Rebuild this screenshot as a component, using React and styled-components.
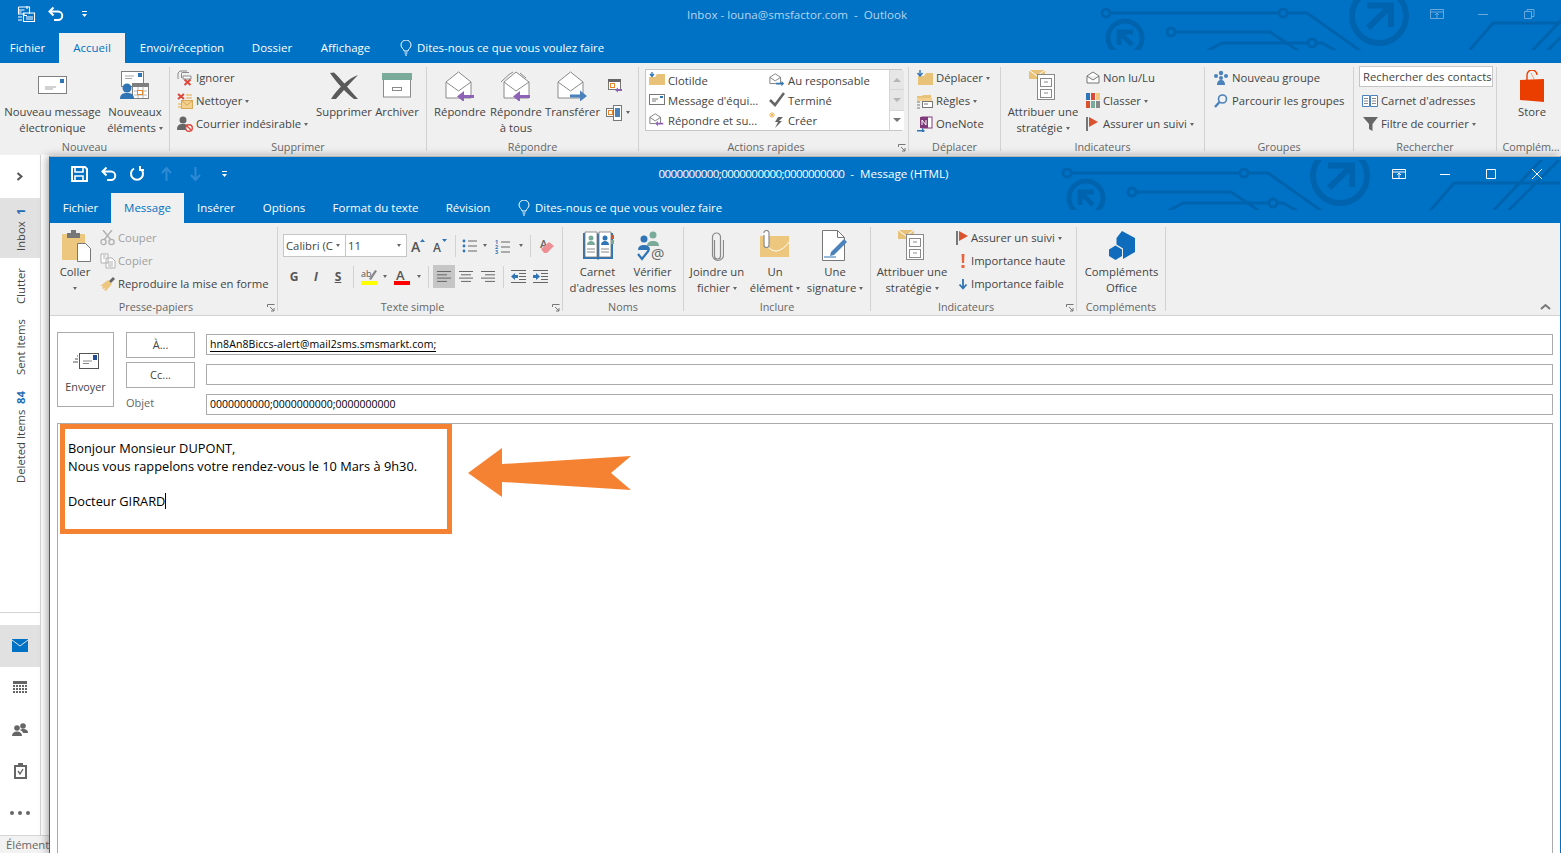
import React from 'react';
import styled, { createGlobalStyle } from 'styled-components';

const BLUE = '#0072c6';
const ART = '#0063ae';
const TEXT = '#444444';
const ORANGE = '#f58233';

const GlobalStyle = createGlobalStyle`
  html, body { margin: 0; padding: 0; background: #fff; }
  body { font-family: "Open Sans", "Noto Sans", sans-serif; font-size: 11.3px; color: ${TEXT}; }
  svg { display: block; flex: none; }
`;

/* ---------- window chrome drawings ---------- */

const CircuitArt = ({ x, w }) => (
  <svg width={w} height="50" viewBox={`${x} 0 ${w} 50`} fill="none" stroke={ART}>
    <g strokeWidth="3">
      <path d="M1106 13H1307L1362 52" />
      <path d="M1171 32H1270L1300 52" />
      <path d="M1205 52L1222 43H1322L1338 52" />
      <circle cx="1106" cy="13" r="4" fill={BLUE} />
      <circle cx="1283" cy="13" r="4" fill={BLUE} />
      <circle cx="1171" cy="32" r="4" fill={BLUE} />
      <circle cx="1312" cy="43" r="4" fill={BLUE} />
      <path d="M1468 52L1493 23H1610" />
      <path d="M1531 52L1582 -2M1546 52L1600 -2" />
    </g>
    <circle cx="1379" cy="16" r="27" strokeWidth="6" />
    <path d="M1367 5.5H1391V27M1391 5.5L1368 28" strokeWidth="6" />
    <circle cx="1125" cy="38" r="17" strokeWidth="5" />
    <path d="M1133 32H1119V45M1119 32L1132 45" strokeWidth="5" />
  </svg>
);

const Ctl = ({ kind, c }) => (
  <svg width="16" height="14" viewBox="0 0 16 14" fill="none" stroke={c}>
    {kind === 'ribbon' && <path d="M.5 1.5h13v9H.5zM.5 4h13M7 10V5M5 7l2-2 2 2" transform="translate(1 1)" />}
    {kind === 'min' && <path d="M3 7.5h10" />}
    {kind === 'max' && <path d="M3.5 2.5h9v9h-9z" />}
    {kind === 'restore' && <path d="M3.5 4.5h7v7h-7zM6 4.5V2.5h7v7h-2.500" />}
    {kind === 'close' && <path d="M3 2l10 10M13 2L3 12" />}
  </svg>
);

const QatGlyph = ({ kind, c = '#fff' }) => (
  <svg width="19" height="18" viewBox="0 0 19 18" fill="none" stroke={c} strokeWidth="1.6">
    {kind === 'all' && (
      <g strokeWidth="1.1">
        <path d="M1.500 2h11v7M1.500 2v7H8M10 1v3M1.500 5h6M1.500 7h3" />
        <path d="M6.500 8h11v8.500h-11zM9 12h7M9 14h7M7 10.500h3" />
        <path d="M1 12h4M1 15h4" />
      </g>
    )}
    {kind === 'undo' && <path d="M4 6.500h8a4 4 0 0 1 0 8.500H8M7.500 2.500L3.500 6.500l4 4" strokeWidth="2" />}
    {kind === 'redo' && <path d="M6 3.500a6 6 0 1 0 6 0M12 1v4h4" strokeWidth="2" />}
    {kind === 'up' && <path d="M9.500 16V4M5 8l4.500-5L14 8" strokeWidth="2" />}
    {kind === 'down' && <path d="M9.500 2v12M5 10l4.500 5 4.500-5" strokeWidth="2" />}
    {kind === 'more' && (
      <g>
        <path d="M7 6.500h5" strokeWidth="1" />
        <path d="M7 9h5l-2.500 3z" fill={c} stroke="none" />
      </g>
    )}
    {kind === 'save' && (
      <g>
        <path d="M2 2h13l2 2v12H2z" strokeWidth="2" />
        <path d="M5 2v5h8V2M5 16v-5h8v5" strokeWidth="1.600" />
      </g>
    )}
  </svg>
);

const Bulb = () => (
  <svg width="12" height="16" viewBox="0 0 12 16" fill="none" stroke="#fff">
    <path d="M4 11c0-2-3-3-3-6a5 5 0 0 1 10 0c0 3-3 4-3 6zM4.500 13h3M5 15h2" />
  </svg>
);

/* ---------- ribbon drawings, main window ---------- */

const NewMail = () => (
  <svg width="30" height="19" viewBox="0 0 30 19">
    <rect x=".5" y=".5" width="28" height="17" fill="#fff" stroke="#7f7f7f" />
    <rect x="22" y="3" width="4" height="4" fill="#2f74b5" />
    <path d="M7 11h11M7 13h8" stroke="#a5a5a5" />
  </svg>
);

const NewItems = () => (
  <svg width="30" height="30" viewBox="0 0 30 30">
    <rect x="1.500" y=".5" width="22" height="15" fill="#fff" stroke="#7f7f7f" />
    <rect x="18" y="2" width="4" height="4" fill="#2f74b5" />
    <path d="M5 5h9M5 7.500h7" stroke="#a5a5a5" />
    <rect x="12.500" y="12.500" width="16" height="15" fill="#fff" stroke="#7f7f7f" />
    <rect x="12" y="12" width="17" height="4" fill="#7f7f7f" />
    <path d="M14 20h13M14 24h13M18 16v11M23 16v11" stroke="#b5b5b5" />
    <rect x="17.500" y="19.500" width="5" height="4" fill="#fff" stroke="#e8862e" />
    <circle cx="7" cy="17" r="4.500" fill="#2f74b5" />
    <path d="M0 28c0-5 3-6 7-6s7 1 7 6z" fill="#2f74b5" />
  </svg>
);

const Small = ({ children, w = 16, h = 16 }) => (
  <svg width={w} height={h} viewBox={`0 0 ${w} ${h}`} fill="none">{children}</svg>
);

const IgnoreIcon = () => (
  <Small>
    <path d="M4.500 8V3.500a1 1 0 0 1 .5-1h7M1 9V3l2-2h7" stroke="#8a8a8a" />
    <path d="M6 6h8v3H6z" fill="#fff" stroke="#8a8a8a" />
    <path d="M7.500 9.500l6 5.500M13.500 9.500l-6 5.500" stroke="#d9483b" strokeWidth="2" />
  </Small>
);
const CleanIcon = () => (
  <Small>
    <rect x="4.500" y="7.500" width="11" height="8" fill="#f3d08d" stroke="#d9a958" />
    <path d="M5 8l5 4 5-4" stroke="#d9a958" />
    <path d="M9 2h6M9 5h6M1 11h3M1 14h3" stroke="#e9c27a" strokeWidth="1.500" />
    <path d="M1 1l6 5M7 1L1 6" stroke="#d9483b" strokeWidth="2" />
  </Small>
);
const JunkIcon = () => (
  <Small>
    <circle cx="6" cy="4" r="3.500" fill="#666" />
    <path d="M0 14c0-5 2-6 6-6s5 1 5 3v3z" fill="#666" />
    <circle cx="12" cy="12" r="3.300" fill="#fff" stroke="#d9483b" strokeWidth="1.400" />
    <path d="M10 10l4 4" stroke="#d9483b" strokeWidth="1.400" />
  </Small>
);
const DeleteX = () => (
  <svg width="30" height="28" viewBox="0 0 30 28">
    <path d="M1 1L5 .5C11 6 20 17 29 27L25 27C17 21 8 11 1 1Z" fill="#5a5a5a" />
    <path d="M29 3C20 6 8 17 2 27L7 27C13 20 21 11 29 3Z" fill="#5a5a5a" />
  </svg>
);
const ArchiveBox = () => (
  <svg width="30" height="25" viewBox="0 0 30 25">
    <rect x="1.500" y="5" width="27" height="19" fill="#fff" stroke="#8a8a8a" />
    <rect width="30" height="7" fill="#7aab9a" />
    <rect x="10.500" y="14.500" width="9" height="3" fill="#fff" stroke="#8a8a8a" />
  </svg>
);
const OpenMail = ({ arrow, stack }) => (
  <svg width="33" height="30" viewBox="0 0 33 30" fill="none">
    {stack && <path d="M1 11L9 3.500 13 1M20 2l6 5" stroke="#8a8a8a" />}
    <path d={`M${stack ? 4 : 2} 11L${stack ? 16 : 14.500} 1L${stack ? 29 : 27} 11V27H${stack ? 4 : 2}Z`} fill="#fff" stroke="#8a8a8a" />
    <path d={`M${stack ? 4 : 2} 11L${stack ? 16 : 14.500} 20L${stack ? 29 : 27} 11`} stroke="#8a8a8a" />
    {arrow === 'reply' && <path d="M13 25.500L20 20V24H30V27H20V31Z" fill="#8e62b5" />}
    {arrow === 'forward' && <path d="M31 25L24 19.500V23.500H14V26.500H24V30.500Z" fill="#4a82bc" />}
  </svg>
);
const MeetReply = () => (
  <Small>
    <rect x="1.500" y="1.500" width="12" height="10" fill="#fff" stroke="#777" />
    <rect x="1" y="1" width="13" height="3" fill="#666" />
    <rect x="3.500" y="5.500" width="4" height="4" stroke="#e8862e" />
    <path d="M8 12l3-2.500v1.500h4v2h-4v1.500z" fill="#8e62b5" />
  </Small>
);
const MobileIcon = () => (
  <Small w={18}>
    <rect x=".5" y="3.500" width="9" height="8" fill="#fff" stroke="#777" />
    <rect x="2.500" y="5.500" width="4" height="4" stroke="#e8862e" />
    <rect x="7.500" y=".5" width="8" height="15" fill="#fff" stroke="#777" />
    <rect x="9" y="3" width="5" height="9" fill="#4a82bc" />
  </Small>
);
const FolderMove = () => (
  <Small w={18}>
    <path d="M2 6h6l2-3h7v12H2z" fill="#e9c27a" />
    <path d="M4 0v5M1.500 3L4 6l2.500-3" stroke="#2f74b5" strokeWidth="1.400" />
  </Small>
);
const RulesIcon = () => (
  <Small w={18}>
    <path d="M1 5V3h5l1-1h8v3z" fill="#e9c27a" />
    <path d="M1 5h15v3H1z" fill="#f3d08d" />
    <rect x="6.500" y="8.500" width="10" height="6" fill="#fff" stroke="#777" />
    <path d="M8 11h4M1 9h3M1 12h3M1 15h3" stroke="#777" />
  </Small>
);
const OneNoteIcon = () => (
  <Small w={18}>
    <rect x="6" y="1" width="10" height="11" fill="#fff" stroke="#80397b" />
    <rect x="4" y="1" width="8" height="11" fill="#80397b" />
    <path d="M6 9V4l4 5V4" stroke="#fff" />
    <path d="M1 14h5v-2l3 3-3 2v-1.500H1z" fill="#2f74b5" />
  </Small>
);
const StrategyIcon = () => (
  <svg width="30" height="31" viewBox="0 0 30 31">
    <path d="M1 0h16v9H1z" fill="#e9c27a" />
    <path d="M1 0l8 6 8-6" stroke="#fff" fill="none" />
    <rect x="9.500" y="4.500" width="17" height="25" fill="#fff" stroke="#8a8a8a" />
    <rect x="12.500" y="8.500" width="11" height="8" fill="#fff" stroke="#8a8a8a" />
    <rect x="12.500" y="19.500" width="11" height="8" fill="#fff" stroke="#8a8a8a" />
    <path d="M16 12h4M16 23h4" stroke="#8a8a8a" />
  </svg>
);
const EnvelopeLine = () => (
  <Small>
    <path d="M2 6L8 2l6 4v7H2zM2 6l6 4 6-4" stroke="#777" fill="#fff" />
  </Small>
);
const ClassIcon = () => (
  <svg width="15" height="16" viewBox="0 0 15 16">
    <rect width="4" height="7" fill="#2f74b5" /><rect x="5" width="4" height="7" fill="#d9483b" /><rect x="10" width="4" height="7" fill="#f3c77f" />
    <rect y="8" width="4" height="7" fill="#d9532f" /><rect x="5" y="8" width="4" height="7" fill="#7aab9a" /><rect x="10" y="8" width="4" height="7" fill="#888" />
  </svg>
);
const FlagIcon = () => (
  <Small>
    <path d="M2 1v14" stroke="#777" strokeWidth="2" />
    <path d="M4 1l9 5-9 5z" fill="#d9532f" />
  </Small>
);
const GroupIcon = () => (
  <Small>
    <circle cx="3" cy="6" r="2" fill="#4a82bc" /><circle cx="8" cy="3" r="2.200" fill="#4a82bc" /><circle cx="13" cy="6" r="2" fill="#4a82bc" />
    <circle cx="8" cy="8" r="2" fill="#4a82bc" /><path d="M4 15c0-4 2-5 4-5s4 1 4 5z" fill="#4a82bc" />
  </Small>
);
const SearchIcon = () => (
  <Small>
    <circle cx="9.500" cy="6" r="4" stroke="#4a82bc" strokeWidth="1.600" />
    <path d="M6.500 9L2 14" stroke="#4a82bc" strokeWidth="2.400" />
  </Small>
);
const BookSmall = () => (
  <svg width="17" height="14" viewBox="0 0 17 14" fill="none">
    <path d="M.5 1.500h7v11h-7zM8.500 1.500h7v11h-7z" stroke="#4a82bc" fill="#fff" />
    <path d="M2 4.500h4M2 7h4M2 9.500h4M10 4.500h4M10 7h4M10 9.500h4" stroke="#888" />
  </svg>
);
const FilterIcon = () => (
  <Small>
    <path d="M0 1h15L9.500 8v7L6 13V8z" fill="#666" />
  </Small>
);
const StoreBag = () => (
  <svg width="26" height="32" viewBox="0 0 26 32">
    <path d="M8 10V5a5 5 0 0 1 10 0" stroke="#e83e00" fill="none" strokeWidth="1.400" />
    <path d="M1 10l24-1v23l-24-2z" fill="#ea3e00" />
    <path d="M12 3l3 6" stroke="#e9a07c" />
  </svg>
);
const Launcher = () => (
  <svg width="8" height="8" viewBox="0 0 8 8" fill="none" stroke="#777">
    <path d="M.5 3V.5H7.500M.5 .5" /><path d="M3 3l4 4M7 4v3H4" />
  </svg>
);

/* quick steps */
const GalleryFolder = () => (
  <Small>
    <path d="M0 5h6l2-3h8v11H0z" fill="#e9c27a" />
    <path d="M3 0v4M1 2l2 2.500L5 2" stroke="#2f74b5" strokeWidth="1.300" />
  </Small>
);
const TeamMail = () => (
  <Small>
    <rect x=".5" y="2.500" width="15" height="10" fill="#fff" stroke="#777" />
    <path d="M3 7h6M3 9h4" stroke="#777" /><rect x="11" y="4" width="3" height="2" fill="#2f74b5" />
  </Small>
);
const MailArrow = ({ c, right }) => (
  <svg width="16" height="16" viewBox="0 0 18 18" fill="none">
    <path d="M1 6l6-4 6 4v7H1zM1 6l6 4 6-4" stroke="#777" fill="#fff" />
    {right ? <path d="M17 13l-3-3v2H8v2h6v2z" fill={c} /> : <path d="M7 13l3-3v2h6v2h-6v2z" fill={c} />}
  </svg>
);
const CheckIcon = () => (
  <Small>
    <path d="M1 8l5 5L15 1" stroke="#666" strokeWidth="2.600" />
  </Small>
);
const BoltIcon = () => (
  <Small>
    <path d="M9 5h5l-4 4h3l-7 7 3-6H6z" fill="#666" />
    <path d="M3 0v6M0 3h6M1 1l4 4M5 1L1 5" stroke="#f0b860" />
  </Small>
);

/* ---------- ribbon drawings, message window ---------- */

const PasteIcon = () => (
  <svg width="34" height="32" viewBox="-4 0 34 32">
    <rect y="4" width="23" height="26" rx="1" fill="#eec77f" />
    <rect x="5" y="3" width="13" height="5" fill="#777" />
    <rect x="9" width="5" height="4" fill="#777" />
    <path d="M15.500 13.500h8l5 5v13h-13z" fill="#fff" stroke="#777" />
  </svg>
);
const CutIcon = () => (
  <Small>
    <path d="M4 10L12 0M11 10L3 0" stroke="#b0b0b0" strokeWidth="1.400" />
    <circle cx="3.500" cy="12" r="2.600" stroke="#b0b0b0" strokeWidth="1.300" />
    <circle cx="11.500" cy="12" r="2.600" stroke="#b0b0b0" strokeWidth="1.300" />
  </Small>
);
const CopyIcon = () => (
  <Small>
    <path d="M1 1h7v9H1zM6 5h6l3 3v7H6z" stroke="#b0b0b0" fill="#fff" />
    <path d="M3 3h3M3 5h2M8 9h5M8 11h5M8 13h5" stroke="#b0b0b0" />
  </Small>
);
const BrushIcon = () => (
  <Small>
    <path d="M0 10L8 4l4 4-6 7-2-1 1-2-2 1-1-1 1-2z" fill="#eec77f" />
    <path d="M9 5l4-4 2 2-4 4z" fill="#666" />
  </Small>
);
const GrowFont = ({ up }) => (
  <svg width="18" height="24" viewBox="0 0 18 24">
    <text x="1" y="18" fontFamily="Open Sans" fontSize={up ? 14 : 12} fontWeight="600" fill="#555">A</text>
    <path d={up ? 'M10 8l2.500-3L15 8z' : 'M10 5h5l-2.500 3z'} fill="#2f74b5" />
  </svg>
);
const BulletList = () => (
  <Small>
    <circle cx="2" cy="3" r="1.400" fill="#2f74b5" /><circle cx="2" cy="8" r="1.400" fill="#2f74b5" /><circle cx="2" cy="13" r="1.400" fill="#2f74b5" />
    <path d="M6 3h9M6 8h9M6 13h9" stroke="#666" />
  </Small>
);
const NumberList = () => (
  <svg width="16" height="24" viewBox="0 0 16 24" fill="none">
    <g fontFamily="Open Sans" fontSize="5.500" fontWeight="700" fill="#2f74b5">
      <text x="0" y="10">1</text>
      <text x="0" y="15">2</text>
      <text x="0" y="20">3</text>
    </g>
    <path d="M6 8h9M6 13h9M6 18h9" stroke="#666" />
  </svg>
);
const EraserIcon = () => (
  <svg width="16" height="24" viewBox="0 0 16 24">
    <text x="1" y="14" fontFamily="Open Sans" fontSize="11" fontWeight="600" fill="#666">A</text>
    <path d="M2 15l8-7 5 4-7 7H5z" fill="#ee8f94" />
  </svg>
);
const Highlight = () => (
  <svg width="17" height="24" viewBox="0 0 17 24">
    <text x="0" y="12" fontFamily="Open Sans" fontSize="9" fill="#555">ab</text>
    <path d="M8 14l6-9 2 1-6 9z" fill="#888" />
    <rect y="16" width="16" height="4" fill="#ff0" />
  </svg>
);
const FontColor = () => (
  <svg width="16" height="24" viewBox="0 0 16 24">
    <text x="2" y="15" fontFamily="Open Sans" fontSize="13" fontWeight="600" fill="#555">A</text>
    <rect y="16" width="16" height="4" fill="#f00" />
  </svg>
);
const AlignLines = ({ kind }) => {
  const short = kind === 'left' ? [1, 11] : kind === 'center' ? [3, 13] : [5, 15];
  const rows = [[1, 15], short, [1, 15], short];
  return (
    <Small h={13}>
      {rows.map(([a, b], i) => <path key={i} d={`M${a} ${1.5 + i * 3.3}H${b}`} stroke="#666" />)}
    </Small>
  );
};
const IndentIcon = ({ out }) => (
  <svg width="16" height="13" viewBox="0 0 16 13" fill="none">
    <path d="M1 .5h15M9 3.500h7M9 6.500h7M9 9.500h7M1 12.500h15" stroke="#666" />
    <path d={out ? 'M1 6.500L5 3v2h3v3H5v2z' : 'M8 6.500L4 3v2H1v3h3v2z'} fill="#2f74b5" />
  </svg>
);
const AddressBook = () => (
  <svg width="32" height="29" viewBox="0 0 32 29">
    <path d="M1 2h14l1 1 1-1h14v26H17l-1 1-1-1H1z" fill="#2f74b5" />
    <path d="M3 1h12v25H3zM17 1h12v25H17z" fill="#fff" stroke="#777" strokeWidth=".8" />
    <circle cx="9" cy="7" r="2.500" fill="#7aab9a" /><path d="M5 14c0-3 2-4 4-4s4 1 4 4z" fill="#7aab9a" />
    <circle cx="23" cy="7" r="2.500" fill="#2f74b5" /><path d="M19 14c0-3 2-4 4-4s4 1 4 4z" fill="#2f74b5" />
    <path d="M5 18h8M5 21h8M19 18h8M19 21h8" stroke="#888" />
    <path d="M29 4h3v4h-3z" fill="#d9532f" /><path d="M29 9h3v4h-3z" fill="#7aab9a" />
  </svg>
);
const CheckNames = () => (
  <svg width="31" height="36" viewBox="0 0 31 36" fill="none">
    <circle cx="16" cy="7" r="3.500" fill="#7aab9a" /><path d="M10 18c0-4 3-5 6-5s6 1 6 5z" fill="#7aab9a" />
    <circle cx="7" cy="11" r="3.500" fill="#2f74b5" /><path d="M1 22c0-4 3-5 6-5s6 1 6 5z" fill="#2f74b5" />
    <path d="M1 26l4 5 7-9" stroke="#2f74b5" strokeWidth="2.200" />
    <text x="14" y="31" fontFamily="Open Sans" fontSize="15" fill="#666">@</text>
  </svg>
);
const Clip = () => (
  <svg width="13" height="32" viewBox="0 0 13 32" fill="none" stroke="#8a8a8a" strokeWidth="1.200">
    <path d="M3.500 9v16a3 3 0 0 0 6 0V6a4 4 0 0 0-8 0v18a5.500 5.500 0 0 0 11 0V9" transform="translate(0 1)" />
  </svg>
);
const ItemAttach = () => (
  <svg width="30" height="31" viewBox="0 0 30 31" fill="none">
    <rect y="6" width="29" height="21" fill="#eec77f" />
    <path d="M5 13c3 6 8 8 11 8s9-3 13-9" stroke="#fff" />
    <path d="M4 5v10a2.500 2.500 0 0 0 5 0V3a2.500 2.500 0 0 0-5 0" stroke="#8a8a8a" fill="#fff" strokeWidth="1.200" />
  </svg>
);
const SignatureIcon = () => (
  <svg width="29" height="32" viewBox="0 0 29 32" fill="none">
    <path d="M1.500.5h15l7 7v23h-22z" fill="#fff" stroke="#777" />
    <path d="M16.500.5v7h7" stroke="#777" />
    <path d="M10 22l13-13 3 3-13 13-4 1z" fill="#4a82bc" />
    <path d="M3 27h12" stroke="#2f74b5" />
  </svg>
);
const Exclaim = () => (
  <Small w={8}>
    <path d="M2.500 1h3l-.5 9H3z" fill="#e8643c" /><rect x="2.500" y="12" width="3" height="3" fill="#e8643c" />
  </Small>
);
const DownArrow = () => (
  <Small w={10}>
    <path d="M5 3v9M1.500 8.500L5 12.500l3.500-4" stroke="#2f74b5" strokeWidth="1.800" />
  </Small>
);
const OfficeHex = () => (
  <svg width="26" height="29" viewBox="0 0 26 29" fill="#0f6cbd">
    <path d="M13 0L26 7V21L14 28V17.500L7.500 13.500V7Z" />
    <path d="M6.500 14.500L13 18.500V25L6.500 29L0 25V18.500Z" />
  </svg>
);
const SendIcon = () => (
  <svg width="26" height="17" viewBox="0 0 26 17">
    <rect x="6.500" y=".5" width="19" height="15" fill="#fff" stroke="#555" />
    <rect x="20" y="2" width="4" height="5" fill="#1f4e96" />
    <path d="M10 8h9M10 10.500h6" stroke="#888" />
    <path d="M4 3h1M2 6h3M0 9h5" stroke="#555" />
  </svg>
);

/* ---------- nav rail drawings ---------- */

const RailMail = () => (
  <svg width="16" height="13" viewBox="0 0 16 13">
    <rect width="16" height="13" fill={BLUE} />
    <path d="M0 1l8 6 8-6" stroke="#e1e1e1" fill="none" />
  </svg>
);
const RailCalendar = () => (
  <svg width="14" height="13" viewBox="0 0 14 13" fill="#666">
    <rect width="14" height="3" />
    {[4, 7, 10].map(y => [0, 3, 6, 9, 12].map(x => <rect key={`${x}-${y}`} x={x} y={y} width="2" height="2" />))}
  </svg>
);
const RailPeople = () => (
  <svg width="16" height="13" viewBox="0 0 16 13" fill="#666">
    <circle cx="5" cy="5" r="2.800" /><path d="M0 13c0-3 2-4.500 5-4.500s5 1.500 5 4.500z" />
    <circle cx="11" cy="3" r="2.800" /><path d="M8 7c1-1 2-1 3-1 3 0 5 1 5 4h-5c0-1-1-2-3-3z" />
  </svg>
);
const RailTasks = () => (
  <svg width="13" height="16" viewBox="0 0 13 16" fill="none">
    <rect y="2" width="13" height="14" fill="#666" />
    <rect x="2" y="4" width="9" height="10" fill="#fff" />
    <rect x="4" width="5" height="4" fill="#666" />
    <path d="M4 8l2 3 3-5" stroke="#666" strokeWidth="1.400" />
  </svg>
);
const RailDots = () => (
  <svg width="20" height="4" viewBox="0 0 20 4" fill="#666">
    <circle cx="2" cy="2" r="2" /><circle cx="10" cy="2" r="2" /><circle cx="18" cy="2" r="2" />
  </svg>
);

/* ---------- styled parts ---------- */

const Desktop = styled.div`
  position: relative;
  width: 1561px;
  height: 853px;
  overflow: hidden;
  background: #fff;
`;

const MainWindow = styled.div`
  display: flex;
  flex-direction: column;
  height: 100%;
`;

const TitleBar = styled.div`
  position: relative;
  display: flex;
  align-items: center;
  height: ${p => p.$h}px;
  flex: none;
  box-sizing: border-box;
  padding-left: ${p => p.$left}px;
  padding-bottom: ${p => p.$lift}px;
  background: ${BLUE};
`;

const ArtLayer = styled.div`
  position: absolute;
  top: ${p => p.$top}px;
  right: 0;
`;

const Qat = styled.div`
  position: relative;
  display: flex;
  width: ${p => p.$w}px;
  flex: none;
`;

const QatButton = styled.div`
  display: flex;
  justify-content: center;
  width: 29px;
`;

const WindowTitle = styled.div`
  position: relative;
  flex: 1;
  text-align: center;
  padding-left: ${p => p.$shift || 0}px;
  padding-right: ${p => p.$pull || 0}px;
  font-size: 11.6px;
  color: ${p => p.$dim ? '#b5d5ef' : '#fff'};
`;

const TitleDigits = styled.span`
  letter-spacing: -0.6px;
`;

const Controls = styled.div`
  position: relative;
  display: flex;
  flex: none;
  margin-right: ${p => p.$right}px;
`;

const ControlButton = styled.div`
  display: flex;
  justify-content: center;
  width: 46px;
`;

const TabRow = styled.div`
  display: flex;
  align-items: stretch;
  height: 30px;
  flex: none;
  background: ${BLUE};
`;

const Tab = styled.div`
  display: flex;
  align-items: center;
  justify-content: center;
  width: ${p => p.$w}px;
  margin-right: ${p => p.$gap || 0}px;
  padding-bottom: 1px;
  box-sizing: border-box;
  font-size: 11.5px;
  color: ${p => p.$active ? BLUE : '#fff'};
  background: ${p => p.$active ? '#f0f0f0' : 'transparent'};
`;

const TellMe = styled.div`
  display: flex;
  align-items: center;
  gap: 5px;
  margin-left: ${p => p.$left}px;
  padding-bottom: 1px;
  font-size: 11.4px;
  color: #fff;
`;

const Ribbon = styled.div`
  display: flex;
  height: 92px;
  flex: none;
  padding-top: 4px;
  box-sizing: border-box;
  background: #f0f0f0;
`;

const Group = styled.section`
  display: flex;
  flex-direction: column;
  width: ${p => p.$w}px;
  height: 84px;
  box-sizing: border-box;
  flex: none;
  border-right: ${p => p.$plain ? 'none' : '1px solid #d2d2d2'};
`;

const GroupBody = styled.div`
  display: flex;
  height: 72px;
  flex: none;
  padding-left: ${p => p.$pad || 0}px;
`;

const GroupLabel = styled.div`
  position: relative;
  height: 12px;
  line-height: 16px;
  padding-right: ${p => p.$launch ? 15 : 0}px;
  padding-left: ${p => p.$nudge || 0}px;
  font-size: 10.8px;
  text-align: center;
  color: #666;
  white-space: nowrap;
`;

const LauncherMark = styled.span`
  position: absolute;
  right: 2px;
  top: 5px;
`;

const LargeButton = styled.div`
  display: flex;
  flex-direction: column;
  align-items: center;
  width: ${p => p.$w}px;
  margin-left: ${p => p.$ml || 0}px;
  flex: none;
  line-height: 16px;
  white-space: nowrap;
  text-align: center;
`;

const IconSlot = styled.div`
  display: flex;
  align-items: center;
  justify-content: center;
  height: 37px;
`;

const Caret = styled.span`
  display: inline-block;
  width: 0;
  height: 0;
  margin-left: ${p => p.$gap ?? 3}px;
  vertical-align: middle;
  border-left: 2.5px solid transparent;
  border-right: 2.5px solid transparent;
  border-top: 3px solid #666;
`;

const Stack = styled.div`
  display: flex;
  flex-direction: column;
  width: ${p => p.$w}px;
  margin-left: ${p => p.$ml || 0}px;
  margin-top: -1px;
  flex: none;
`;

const SmallRow = styled.div`
  display: flex;
  align-items: center;
  gap: ${p => p.$gap ?? 3}px;
  height: 23px;
  white-space: nowrap;
  color: ${p => p.$off ? '#a0a0a0' : TEXT};
`;

const MeetSlot = styled(SmallRow)`
  height: 35px;
  padding-top: 5px;
  box-sizing: border-box;
`;

const RowIcon = styled.span`
  display: flex;
  justify-content: center;
  width: ${p => p.$w || 16}px;
  flex: none;
`;

const Gallery = styled.div`
  display: flex;
  width: 257px;
  height: 62px;
  margin: 2px 0 0 6px;
  box-sizing: border-box;
  border: 1px solid #c6c6c6;
  background: #fff;
`;

const GalleryGrid = styled.div`
  display: grid;
  grid-template-columns: 120px 120px;
  grid-auto-rows: 20px;
  flex: 1;
  padding-left: 3px;
`;

const GalleryItem = styled.div`
  display: flex;
  align-items: center;
  gap: 3px;
  white-space: nowrap;
`;

const GalleryScroll = styled.div`
  display: flex;
  flex-direction: column;
  width: 14px;
  flex: none;
  border-left: 1px solid #d6d6d6;
`;

const ScrollCell = styled.div`
  display: flex;
  align-items: center;
  justify-content: center;
  flex: 1;
  background: ${p => p.$plain ? '#fff' : '#e6e6e6'};
  border-bottom: ${p => p.$plain ? 'none' : '1px solid #d6d6d6'};
`;

const ScrollArrow = styled.span`
  width: 0;
  height: 0;
  border-left: 4px solid transparent;
  border-right: 4px solid transparent;
  ${p => p.$up ? 'border-bottom: 4px solid #b5b5b5;' : `border-top: 4px solid ${p.$dark ? '#777' : '#b5b5b5'};`}
`;

const SearchField = styled.div`
  display: flex;
  align-items: center;
  width: 134px;
  height: 21px;
  margin: 0 0 2px 5px;
  padding-left: 3px;
  box-sizing: border-box;
  border: 1px solid #c6c6c6;
  background: #fff;
  font-size: 11.3px;
  white-space: nowrap;
  overflow: hidden;
`;

const SearchRows = styled.div`
  padding-left: 8px;
`;

const FontTools = styled.div`
  display: flex;
  flex-direction: column;
  height: 72px;
  flex: none;
  box-sizing: border-box;
  padding: 3px 0 0 5px;
`;

const ToolRow = styled.div`
  display: flex;
  align-items: center;
  height: ${p => p.$h}px;
  margin-top: ${p => p.$top || 0}px;
`;

const Combo = styled.div`
  display: flex;
  align-items: center;
  justify-content: space-between;
  width: ${p => p.$w}px;
  height: 23px;
  padding: 0 5px 0 2px;
  box-sizing: border-box;
  border: 1px solid #c6c6c6;
  margin-right: ${p => p.$gap || 0}px;
  background: #fff;
  white-space: nowrap;
  overflow: hidden;
`;

const Tool = styled.div`
  display: flex;
  align-items: center;
  justify-content: center;
  width: ${p => p.$w || 22}px;
  height: 23px;
  background: ${p => p.$on ? '#c6c6c6' : 'transparent'};
  font: ${p => p.$font || 'inherit'};
  color: #555;
`;

const ToolSep = styled.div`
  width: 1px;
  height: 22px;
  margin-left: ${p => p.$ml}px;
  margin-right: ${p => p.$mr}px;
  background: #d2d2d2;
`;

const Collapse = styled.div`
  display: flex;
  flex: 1;
  justify-content: flex-end;
  align-items: flex-end;
  padding: 0 9px 5px 0;
`;

const Workspace = styled.div`
  display: flex;
  flex: 1;
  min-height: 0;
`;

const Rail = styled.nav`
  display: flex;
  flex-direction: column;
  width: 41px;
  box-sizing: border-box;
  border-right: 1px solid #d4d4d4;
`;

const RailToggle = styled.div`
  display: flex;
  align-items: center;
  justify-content: center;
  height: 43px;
  padding-right: 2px;
  box-sizing: border-box;
  flex: none;
`;

const FolderTab = styled.div`
  display: flex;
  align-items: center;
  justify-content: flex-start;
  height: ${p => p.$h}px;
  box-sizing: border-box;
  padding-top: 7px;
  flex: none;
  writing-mode: vertical-rl;
  transform: rotate(180deg);
  white-space: nowrap;
  font-size: 11.3px;
  background: ${p => p.$on ? '#e1e1e1' : 'transparent'};
`;

const FolderInner = styled.div`
  display: flex;
  align-items: center;
  flex-direction: row;
  gap: 6px;
`;

const Count = styled.b`
  color: #1f6cb5;
  font-weight: 700;
`;

const RailModules = styled.div`
  margin-top: auto;
  padding-top: 12px;
  border-top: 1px solid #d4d4d4;
`;

const ModuleButton = styled.div`
  display: flex;
  align-items: center;
  justify-content: center;
  height: 42px;
  padding-bottom: 2px;
  box-sizing: border-box;
  background: ${p => p.$on ? '#e1e1e1' : 'transparent'};
`;

const StatusBar = styled.div`
  height: 17px;
  flex: none;
  padding-left: 6px;
  line-height: 18px;
  border-top: 1px solid #d4d4d4;
  background: #f2f2f2;
  font-size: 11.3px;
  color: #666;
`;

const ComposeWindow = styled.div`
  position: absolute;
  left: 49px;
  top: 156px;
  right: 0;
  bottom: 0;
  display: flex;
  flex-direction: column;
  box-sizing: border-box;
  border-top: 1px solid #b4b4b4;
  border-left: 1px solid ${BLUE};
  border-right: 1px solid ${BLUE};
  background: #fff;
  box-shadow: -2px 0 8px rgba(0, 0, 0, 0.35);
`;

const RibbonEdge = styled.div`
  height: 1px;
  flex: none;
  background: #d2d2d2;
`;

const ComposeBody = styled.div`
  display: flex;
  flex-direction: column;
  flex: 1;
  min-height: 0;
  padding: 16px 7px 0;
`;

const Header = styled.div`
  display: flex;
  align-items: flex-start;
  flex: none;
`;

const SendButton = styled.div`
  display: flex;
  flex-direction: column;
  align-items: center;
  width: 57px;
  height: 75px;
  padding-top: 20px;
  box-sizing: border-box;
  gap: 9px;
  margin-right: 12px;
  border: 1px solid #ababab;
  font-size: 10.8px;
  color: #444;
`;

const Fields = styled.div`
  display: grid;
  grid-template-columns: 69px 1fr;
  grid-auto-rows: 30px;
  column-gap: 11px;
  flex: 1;
`;

const AddressButton = styled.div`
  display: flex;
  align-items: center;
  justify-content: center;
  height: 26px;
  padding-bottom: 1px;
  box-sizing: border-box;
  border: 1px solid #ababab;
  font-size: 11px;
`;

const SubjectLabel = styled.div`
  line-height: 18px;
  margin-top: 2px;
  font-size: 11px;
  color: #666;
`;

const FieldInput = styled.div`
  height: 21px;
  margin-top: 2px;
  padding-left: 3px;
  line-height: 18px;
  box-sizing: border-box;
  border: 1px solid #ababab;
  font-size: 10.5px;
  color: #000;
`;

const Recipient = styled.span`
  letter-spacing: 0.1px;
  border-bottom: 1px solid #000;
`;

const MessageArea = styled.div`
  display: flex;
  align-items: flex-start;
  flex: 1;
  margin-top: 1px;
  padding-left: 2px;
  border: 1px solid #ababab;
  border-bottom: none;
`;

const CalloutBox = styled.div`
  width: 392px;
  height: 110px;
  box-sizing: border-box;
  padding: 11px 0 0 3px;
  border: 5px solid ${ORANGE};
  font-size: 12.8px;
  line-height: 17.67px;
  color: #000;
`;

const Cursor = styled.span`
  display: inline-block;
  height: 16px;
  border-left: 1px solid #000;
  vertical-align: -3px;
`;

const CalloutArrow = styled.div`
  margin: 24px 0 0 16px;
`;

const Row = ({ icon, w, off, gap, children, caret }) => (
  <SmallRow $off={off} $gap={gap}>
    <RowIcon $w={w}>{icon}</RowIcon>
    <span>{children}{caret && <Caret />}</span>
  </SmallRow>
);

const Big = ({ w, ml, icon, l1, l2, caret }) => (
  <LargeButton $w={w} $ml={ml}>
    <IconSlot>{icon}</IconSlot>
    <span>{l1}</span>
    {(l2 || caret) && <span>{l2}{caret && <Caret />}</span>}
  </LargeButton>
);

const MainRibbon = () => (
  <Ribbon>
    <Group $w={170}>
      <GroupBody>
        <Big w={105} icon={<NewMail />} l1="Nouveau message" l2="électronique" />
        <Big w={60} icon={<NewItems />} l1="Nouveaux" l2="éléments" caret />
      </GroupBody>
      <GroupLabel>Nouveau</GroupLabel>
    </Group>
    <Group $w={257}>
      <GroupBody $pad={7}>
        <Stack $w={139}>
          <Row icon={<IgnoreIcon />}>Ignorer</Row>
          <Row icon={<CleanIcon />} caret>Nettoyer</Row>
          <Row icon={<JunkIcon />} caret>Courrier indésirable</Row>
        </Stack>
        <Big w={56} icon={<DeleteX />} l1="Supprimer" />
        <Big w={50} icon={<ArchiveBox />} l1="Archiver" />
      </GroupBody>
      <GroupLabel>Supprimer</GroupLabel>
    </Group>
    <Group $w={212}>
      <GroupBody $pad={5}>
        <Big w={56} icon={<OpenMail arrow="reply" />} l1="Répondre" />
        <Big w={56} icon={<OpenMail arrow="reply" stack />} l1="Répondre" l2="à tous" />
        <Big w={57} icon={<OpenMail arrow="forward" />} l1="Transférer" />
        <Stack $w={30} $ml={3}>
          <MeetSlot><RowIcon $w={22}><MeetReply /></RowIcon></MeetSlot>
          <SmallRow $gap={0}><RowIcon $w={22}><MobileIcon /></RowIcon><Caret $gap={0} /></SmallRow>
        </Stack>
      </GroupBody>
      <GroupLabel>Répondre</GroupLabel>
    </Group>
    <Group $w={270}>
      <GroupBody>
        <Gallery>
          <GalleryGrid>
            <GalleryItem><GalleryFolder /><span>Clotilde</span></GalleryItem>
            <GalleryItem><MailArrow c="#2f74b5" right /><span>Au responsable</span></GalleryItem>
            <GalleryItem><TeamMail /><span>Message d'équi...</span></GalleryItem>
            <GalleryItem><CheckIcon /><span>Terminé</span></GalleryItem>
            <GalleryItem><MailArrow c="#8e62b5" /><span>Répondre et su...</span></GalleryItem>
            <GalleryItem><BoltIcon /><span>Créer</span></GalleryItem>
          </GalleryGrid>
          <GalleryScroll>
            <ScrollCell><ScrollArrow $up /></ScrollCell>
            <ScrollCell><ScrollArrow /></ScrollCell>
            <ScrollCell $plain><ScrollArrow $dark /></ScrollCell>
          </GalleryScroll>
        </Gallery>
      </GroupBody>
      <GroupLabel $launch>Actions rapides<LauncherMark><Launcher /></LauncherMark></GroupLabel>
    </Group>
    <Group $w={92}>
      <GroupBody $pad={7}>
        <Stack $w={84}>
          <Row icon={<FolderMove />} w={18} gap={2} caret>Déplacer</Row>
          <Row icon={<RulesIcon />} w={18} gap={2} caret>Règles</Row>
          <Row icon={<OneNoteIcon />} w={18} gap={2}>OneNote</Row>
        </Stack>
      </GroupBody>
      <GroupLabel>Déplacer</GroupLabel>
    </Group>
    <Group $w={204}>
      <GroupBody $pad={5}>
        <Big w={74} icon={<StrategyIcon />} l1="Attribuer une" l2="stratégie" caret />
        <Stack $w={118} $ml={5}>
          <Row icon={<EnvelopeLine />} gap={2}>Non lu/Lu</Row>
          <Row icon={<ClassIcon />} gap={2} caret>Classer</Row>
          <Row icon={<FlagIcon />} gap={2} caret>Assurer un suivi</Row>
        </Stack>
      </GroupBody>
      <GroupLabel>Indicateurs</GroupLabel>
    </Group>
    <Group $w={149}>
      <GroupBody $pad={8}>
        <Stack $w={136}>
          <Row icon={<GroupIcon />}>Nouveau groupe</Row>
          <Row icon={<SearchIcon />}>Parcourir les groupes</Row>
        </Stack>
      </GroupBody>
      <GroupLabel>Groupes</GroupLabel>
    </Group>
    <Group $w={143}>
      <GroupBody>
        <Stack $w={140}>
          <SearchField>Rechercher des contacts</SearchField>
          <SearchRows>
            <Row icon={<BookSmall />} w={17} gap={2}>Carnet d'adresses</Row>
            <Row icon={<FilterIcon />} w={17} gap={2} caret>Filtre de courrier</Row>
          </SearchRows>
        </Stack>
      </GroupBody>
      <GroupLabel>Rechercher</GroupLabel>
    </Group>
    <Group $w={64} $plain>
      <GroupBody>
        <Big w={70} icon={<StoreBag />} l1="Store" />
      </GroupBody>
      <GroupLabel $nudge={4}>Complém...</GroupLabel>
    </Group>
  </Ribbon>
);

const MessageRibbon = () => (
  <Ribbon>
    <Group $w={228}>
      <GroupBody $pad={5}>
        <LargeButton $w={40}>
          <IconSlot><PasteIcon /></IconSlot>
          <span>Coller</span>
          <span><Caret $gap={0} /></span>
        </LargeButton>
        <Stack $w={180} $ml={5}>
          <Row icon={<CutIcon />} off gap={2}>Couper</Row>
          <Row icon={<CopyIcon />} off gap={2}>Copier</Row>
          <Row icon={<BrushIcon />} gap={2}>Reproduire la mise en forme</Row>
        </Stack>
      </GroupBody>
      <GroupLabel $launch>Presse-papiers<LauncherMark><Launcher /></LauncherMark></GroupLabel>
    </Group>
    <Group $w={285}>
      <FontTools>
        <ToolRow $h={31}>
          <Combo $w={63} $gap={-1}>Calibri (C<Caret $gap={0} /></Combo>
          <Combo $w={62}>11<Caret $gap={0} /></Combo>
          <Tool $w={24}><GrowFont up /></Tool>
          <Tool $w={20}><GrowFont /></Tool>
          <ToolSep $ml={4} $mr={5} />
          <Tool $w={18}><BulletList /></Tool>
          <Caret $gap={4} />
          <Tool $w={32}><NumberList /></Tool>
          <Caret $gap={0} />
          <ToolSep $ml={7} $mr={5} />
          <Tool $w={22}><EraserIcon /></Tool>
        </ToolRow>
        <ToolRow $h={23} $top={4}>
          <Tool $font={'700 12px "Open Sans"'}>G</Tool>
          <Tool $font={'italic 700 12px "Open Sans"'}>I</Tool>
          <Tool $font={'700 12px "Open Sans"'}><u>S</u></Tool>
          <ToolSep $ml={4} $mr={4} />
          <Tool><Highlight /></Tool>
          <Caret $gap={3} />
          <Tool $w={30}><FontColor /></Tool>
          <Caret $gap={0} />
          <ToolSep $ml={7} $mr={4} />
          <Tool $on><AlignLines kind="left" /></Tool>
          <Tool><AlignLines kind="center" /></Tool>
          <Tool><AlignLines kind="right" /></Tool>
          <ToolSep $ml={4} $mr={3} />
          <Tool><IndentIcon out /></Tool>
          <Tool><IndentIcon /></Tool>
        </ToolRow>
      </FontTools>
      <GroupLabel $launch>Texte simple<LauncherMark><Launcher /></LauncherMark></GroupLabel>
    </Group>
    <Group $w={121}>
      <GroupBody $pad={7}>
        <Big w={55} icon={<AddressBook />} l1="Carnet" l2="d'adresses" />
        <Big w={55} icon={<CheckNames />} l1="Vérifier" l2="les noms" />
      </GroupBody>
      <GroupLabel>Noms</GroupLabel>
    </Group>
    <Group $w={187}>
      <GroupBody $pad={4}>
        <Big w={58} icon={<Clip />} l1="Joindre un" l2="fichier" caret />
        <Big w={58} icon={<ItemAttach />} l1="Un" l2="élément" caret />
        <Big w={62} icon={<SignatureIcon />} l1="Une" l2="signature" caret />
      </GroupBody>
      <GroupLabel>Inclure</GroupLabel>
    </Group>
    <Group $w={206}>
      <GroupBody $pad={5}>
        <Big w={72} icon={<StrategyIcon />} l1="Attribuer une" l2="stratégie" caret />
        <Stack $w={125} $ml={7}>
          <Row icon={<FlagIcon />} gap={0} caret>Assurer un suivi</Row>
          <Row icon={<Exclaim />} gap={0}>Importance haute</Row>
          <Row icon={<DownArrow />} gap={0}>Importance faible</Row>
        </Stack>
      </GroupBody>
      <GroupLabel $launch>Indicateurs<LauncherMark><Launcher /></LauncherMark></GroupLabel>
    </Group>
    <Group $w={89}>
      <GroupBody>
        <Big w={89} icon={<OfficeHex />} l1="Compléments" l2="Office" />
      </GroupBody>
      <GroupLabel>Compléments</GroupLabel>
    </Group>
    <Collapse>
      <svg width="11" height="7" viewBox="0 0 11 7" fill="none" stroke="#777" strokeWidth="2">
        <path d="M1 6l4.500-4L10 6" />
      </svg>
    </Collapse>
  </Ribbon>
);

const App = () => (
  <Desktop>
    <GlobalStyle />
    <MainWindow>
      <TitleBar $h={33} $left={12} $lift={5}>
        <ArtLayer $top={0}><CircuitArt x={1090} w={471} /></ArtLayer>
        <Qat $w={108}>
          <QatButton><QatGlyph kind="all" /></QatButton>
          <QatButton><QatGlyph kind="undo" /></QatButton>
          <QatButton><QatGlyph kind="more" /></QatButton>
        </Qat>
        <WindowTitle $dim $shift={60}>Inbox - louna@smsfactor.com&nbsp; -&nbsp; Outlook</WindowTitle>
        <Controls $right={9}>
          <ControlButton><Ctl kind="ribbon" c="#6aa8dc" /></ControlButton>
          <ControlButton><Ctl kind="min" c="#6aa8dc" /></ControlButton>
          <ControlButton><Ctl kind="restore" c="#6aa8dc" /></ControlButton>
        </Controls>
      </TitleBar>
      <TabRow>
        <Tab $w={55} $gap={4}>Fichier</Tab>
        <Tab $w={66} $active>Accueil</Tab>
        <Tab $w={114}>Envoi/réception</Tab>
        <Tab $w={66}>Dossier</Tab>
        <Tab $w={81}>Affichage</Tab>
        <TellMe $left={14}><Bulb />Dites-nous ce que vous voulez faire</TellMe>
      </TabRow>
      <MainRibbon />
      <Workspace>
        <Rail>
          <RailToggle>
            <svg width="7" height="9" viewBox="0 0 7 9" fill="none" stroke="#555" strokeWidth="2"><path d="M1.500 1l4 3.500-4 3.500" /></svg>
          </RailToggle>
          <FolderTab $h={60} $on><FolderInner>Inbox <Count>1</Count></FolderInner></FolderTab>
          <FolderTab $h={53}><FolderInner>Clutter</FolderInner></FolderTab>
          <FolderTab $h={71}><FolderInner>Sent Items</FolderInner></FolderTab>
          <FolderTab $h={108}><FolderInner>Deleted Items <Count>84</Count></FolderInner></FolderTab>
          <RailModules>
            <ModuleButton $on><RailMail /></ModuleButton>
            <ModuleButton><RailCalendar /></ModuleButton>
            <ModuleButton><RailPeople /></ModuleButton>
            <ModuleButton><RailTasks /></ModuleButton>
            <ModuleButton><RailDots /></ModuleButton>
          </RailModules>
        </Rail>
      </Workspace>
      <StatusBar>Éléments : 2</StatusBar>
    </MainWindow>

    <ComposeWindow>
      <TitleBar $h={36} $left={15} $lift={3}>
        <ArtLayer $top={3}><CircuitArt x={1099} w={500} /></ArtLayer>
        <Qat $w={174}>
          <QatButton><QatGlyph kind="save" /></QatButton>
          <QatButton><QatGlyph kind="undo" /></QatButton>
          <QatButton><QatGlyph kind="redo" /></QatButton>
          <QatButton><QatGlyph kind="up" c="#2f8ad6" /></QatButton>
          <QatButton><QatGlyph kind="down" c="#2f8ad6" /></QatButton>
          <QatButton><QatGlyph kind="more" /></QatButton>
        </Qat>
        <WindowTitle $pull={8}><TitleDigits>0000000000;0000000000;0000000000</TitleDigits>&nbsp; -&nbsp; Message (HTML)</WindowTitle>
        <Controls $right={0}>
          <ControlButton><Ctl kind="ribbon" c="#fff" /></ControlButton>
          <ControlButton><Ctl kind="min" c="#fff" /></ControlButton>
          <ControlButton><Ctl kind="max" c="#fff" /></ControlButton>
          <ControlButton><Ctl kind="close" c="#fff" /></ControlButton>
        </Controls>
      </TitleBar>
      <TabRow>
        <Tab $w={61}>Fichier</Tab>
        <Tab $w={73} $active>Message</Tab>
        <Tab $w={64}>Insérer</Tab>
        <Tab $w={72}>Options</Tab>
        <Tab $w={111}>Format du texte</Tab>
        <Tab $w={74}>Révision</Tab>
        <TellMe $left={13}><Bulb />Dites-nous ce que vous voulez faire</TellMe>
      </TabRow>
      <MessageRibbon />
      <RibbonEdge />
      <ComposeBody>
        <Header>
          <SendButton><SendIcon />Envoyer</SendButton>
          <Fields>
            <AddressButton>À...</AddressButton>
            <FieldInput><Recipient>hn8An8Biccs-alert@mail2sms.smsmarkt.com;</Recipient></FieldInput>
            <AddressButton>Cc...</AddressButton>
            <FieldInput />
            <SubjectLabel>Objet</SubjectLabel>
            <FieldInput>0000000000;0000000000;0000000000</FieldInput>
          </Fields>
        </Header>
        <MessageArea>
          <CalloutBox>
            Bonjour Monsieur DUPONT,<br />
            Nous vous rappelons votre rendez-vous le 10 Mars à 9h30.<br />
            <br />
            Docteur GIRARD<Cursor />
          </CalloutBox>
          <CalloutArrow>
            <svg width="164" height="50" viewBox="0 0 164 50">
              <path d="M0 25L34 0V16L163 8L143 25L163 42L34 34V49Z" fill={ORANGE} />
            </svg>
          </CalloutArrow>
        </MessageArea>
      </ComposeBody>
    </ComposeWindow>
  </Desktop>
);

export default App;
